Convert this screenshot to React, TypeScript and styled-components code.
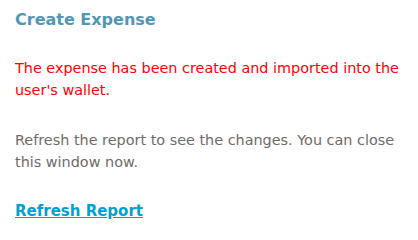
import styled, { createGlobalStyle } from 'styled-components';

const GlobalStyle = createGlobalStyle`
  body {
    margin: 0;
    background: #ffffff;
    font-family: Tahoma, "DejaVu Sans", Verdana, sans-serif;
  }
`;

const Panel = styled.div`
  display: flex;
  flex-direction: column;
  padding: 10px 4px 0 15px;
`;

const Title = styled.h2`
  margin: 0;
  font-size: 16px;
  font-weight: bold;
  line-height: 19px;
  color: #4f97b5;
`;

const Message = styled.p<{ $error?: boolean }>`
  margin: 0;
  font-size: 14.4px;
  line-height: 22px;
  color: ${(props) => (props.$error ? '#ff0000' : '#6f6b67')};
`;

const Section = styled.div<{ $gap: number }>`
  margin-top: ${(props) => props.$gap}px;
`;

const LinkRow = styled.div<{ $gap: number }>`
  margin-top: ${(props) => props.$gap}px;
  line-height: 22px;
`;

const RefreshLink = styled.a`
  font-size: 15px;
  font-weight: bold;
  color: #00a0d2;
  text-decoration: underline;
  cursor: pointer;
`;

export default function App() {
  return (
    <>
      <GlobalStyle />
      <Panel>
        <Title>Create Expense</Title>
        <Section $gap={28}>
          <Message $error>The expense has been created and imported into the user's wallet.</Message>
        </Section>
        <Section $gap={28}>
          <Message>Refresh the report to see the changes. You can close this window now.</Message>
        </Section>
        <LinkRow $gap={27}>
          <RefreshLink href="#">Refresh Report</RefreshLink>
        </LinkRow>
      </Panel>
    </>
  );
}
